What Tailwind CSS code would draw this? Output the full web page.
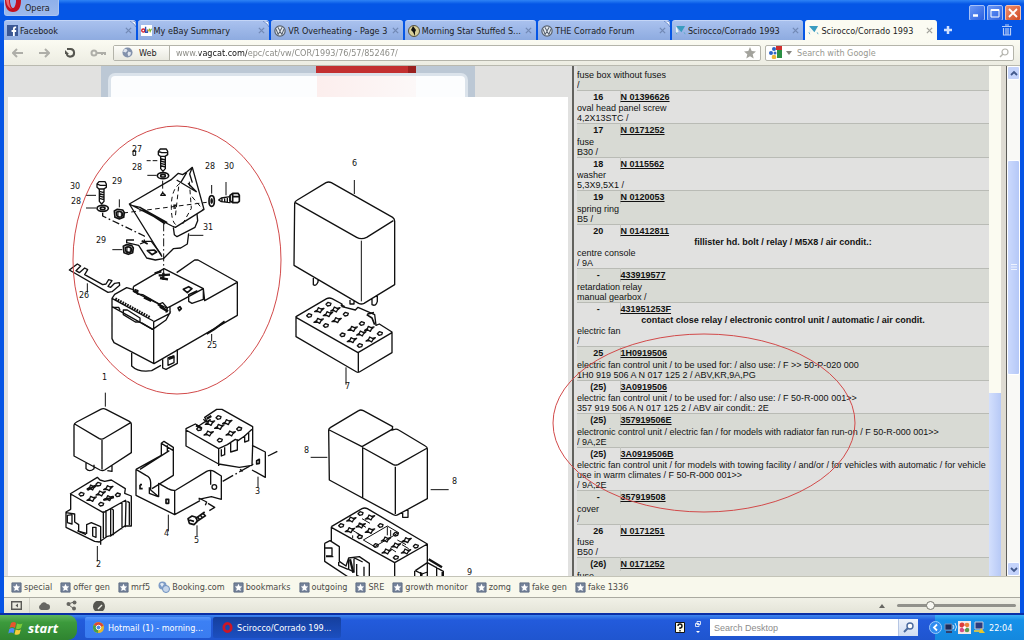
<!DOCTYPE html>
<html lang="en">
<head>
    <meta charset="UTF-8">
    <meta name="viewport" content="width=device-width, initial-scale=1.0">
    <title>Scirocco/Corrado 1993</title>
    <script src="https://cdn.jsdelivr.net/npm/@tailwindcss/browser@4"></script>
</head>
<body class="h-screen overflow-hidden flex flex-col bg-[#0554e5] font-['DejaVu_Sans_Condensed','DejaVu_Sans',sans-serif] text-[9px] leading-3 text-[#222]">

    <!-- shared symbols -->
    <svg class="hidden">
        <symbol id="vw" viewBox="0 0 14 14">
            <circle cx="7" cy="7" r="6" fill="#e8edf3" stroke="#56606e" stroke-width="1.4"/>
            <path d="M4.5 2.5 7 7l2.5-4.500M2.500 5l2.300 6L7 7.500 9.200 11l2.300-6" fill="none" stroke="#56606e" stroke-width="1.2"/>
        </symbol>
        <symbol id="vag" viewBox="0 0 12 12">
            <path d="M1 1h10L7 8z" fill="#3a9cc0"/><path d="M1 1l3 6-3 2z" fill="#e9f4f8"/><path d="M1 8l1 2M10 8l1 2" stroke="#59a9c6"/>
        </symbol>
        <symbol id="star" viewBox="0 0 12 12">
            <path d="M1 1h10v10H1z" fill="#75839b" stroke="#5d6b82"/>
            <path d="M6 2l1.200 2.700 2.800.3-2.100 1.900.6 2.900L6 8.400 3.500 9.800l.6-2.900L2 5l2.800-.3z" fill="#fff"/>
        </symbol>
        <symbol id="close" viewBox="0 0 8 8"><path d="M1 1l6 6M7 1L1 7" stroke="currentColor" stroke-width="1.500"/></symbol>
        <symbol id="curl" viewBox="0 0 6 6"><path d="M0 0h3q3 0 3 3v3Q5 3 0 0z" fill="#eef3fc" stroke="#5b7fc4" stroke-width=".7"/></symbol>
    </svg>

    <!-- title bar -->
    <header class="h-5 shrink-0 flex items-start justify-between pl-1 pr-[3px] bg-linear-to-b from-[#2e83f5] via-[#0556e6] via-20% to-[#0556e6]">
        <button class="h-4 flex items-center gap-1 pr-2 rounded-b-[3px] border border-t-0 border-[#a9c4f2] bg-linear-to-b from-[#8fb0ea] to-[#9cb9ec]">
            <svg class="w-4 h-4" viewBox="0 0 16 16"><path d="M0 0h5v2q1 6 3 6t3-6V0h5q0 12-8 12T0 0z" fill="#c4111f"/><path d="M1 0h3q0 7 3 9Q2 8 1 0z" fill="#ec6a70"/></svg>
            Opera
        </button>
        <div class="flex gap-[2px] pt-[5px]">
            <button aria-label="Minimize" class="w-4 h-4 rounded-[2px] border border-[#a6c1f7] bg-linear-to-br from-[#6a97f5] to-[#2b5fe0]"><svg viewBox="0 0 14 14"><path d="M3 9.500h5" stroke="#fff" stroke-width="2.500"/></svg></button>
            <button aria-label="Maximize" class="w-4 h-4 rounded-[2px] border border-[#a6c1f7] bg-linear-to-br from-[#6a97f5] to-[#2b5fe0]"><svg viewBox="0 0 14 14"><path d="M3 3.500h8V11H3z" fill="none" stroke="#fff"/><path d="M3 4h8" stroke="#fff" stroke-width="2"/></svg></button>
            <button aria-label="Close" class="w-4 h-4 rounded-[2px] border border-[#f3c0ae] bg-linear-to-br from-[#ee8d6b] to-[#d04a22]"><svg viewBox="0 0 14 14"><path d="M3 3l8 8M11 3l-8 8" stroke="#fff" stroke-width="1.800"/></svg></button>
        </div>
    </header>

    <!-- tabs -->
    <nav class="h-5 shrink-0 flex items-end px-1 bg-[#0556e6]">
        <div id="tabs" class="flex-1 max-w-[933px] flex gap-[2px] h-5"></div>
        <button aria-label="New tab" class="ml-[1px] w-5 h-5 flex items-center justify-center"><svg class="w-[10px] h-[10px]" viewBox="0 0 10 10"><path d="M5 1v8M1 5h8" stroke="#cfe0ff" stroke-width="2.500"/></svg></button>
        <button aria-label="Closed tabs" class="ml-auto mr-2 h-5 flex items-center"><svg class="w-[10px] h-3" viewBox="0 0 10 12"><path d="M0 2.500h10M3 1h4M1.500 4v7h7V4M4 4v7M6 4v7" stroke="#b9cdf6" stroke-width="1.200" fill="none"/></svg></button>
    </nav>

    <!-- address bar -->
    <div class="h-[26px] shrink-0 mx-1 px-2 flex items-center bg-linear-to-b from-[#fbfbf2] to-[#ecece2] border-b border-[#b9b9af]">
        <div class="flex items-center gap-[14px] w-[101px] shrink-0">
            <button aria-label="Back"><svg class="w-3 h-3" viewBox="0 0 12 12"><path d="M1 6h10M5 2L1 6l4 4" stroke="#aeaea8" stroke-width="2" fill="none"/></svg></button>
            <button aria-label="Forward"><svg class="w-3 h-3" viewBox="0 0 12 12"><path d="M11 6H1M7 2l4 4-4 4" stroke="#aeaea8" stroke-width="2" fill="none"/></svg></button>
            <button aria-label="Reload"><svg class="w-3 h-3" viewBox="0 0 12 12"><path d="M3 2h3.500a3.800 3.800 0 1 1-3.800 5" stroke="#55554f" stroke-width="2" fill="none"/><path d="M1 7V3l4 4z" fill="#55554f"/></svg></button>
            <button aria-label="Log in"><svg class="w-4 h-3" viewBox="0 0 16 12"><circle cx="4" cy="6" r="2.500" fill="none" stroke="#aeaea8" stroke-width="2"/><path d="M6 6h9v2M12 6v2" stroke="#aeaea8" stroke-width="2" fill="none"/></svg></button>
        </div>
        <div class="flex-1 h-4 flex items-center border border-[#b4b4aa] rounded-[2px] bg-white">
            <button class="h-full w-14 shrink-0 flex items-center gap-[6px] pl-2 border-r border-[#b4b4aa] bg-linear-to-b from-[#fdfdf9] to-[#e9e9e0]">
                <svg class="w-[11px] h-[11px]" viewBox="0 0 12 12"><circle cx="6" cy="6" r="5.500" fill="#8291ab"/><path d="M3 2q3 0 3 2L4 6 1 5zM7 5l3 1-1 3-2 1-1-3z" fill="#dfe5ee"/></svg>
                Web
            </button>
            <input type="text" aria-label="Address" value="www.vagcat.com/epc/cat/vw/COR/1993/76/57/852467/" class="flex-1 min-w-0 ml-1 pl-[2px] outline-none bg-clip-text text-transparent bg-[linear-gradient(90deg,#85857f_25px,#111_25px,#111_73px,#85857f_73px)]">
            <button aria-label="Bookmark" class="pr-1"><svg class="w-3 h-3" viewBox="0 0 12 12"><path d="M6 0l1.700 4 4.300.4-3.300 2.900 1 4.200L6 9.300l-3.700 2.200 1-4.200L0 4.400 4.300 4z" fill="#a3a39d"/></svg></button>
        </div>
        <div class="w-[249px] h-4 ml-1 mr-[-2px] flex items-center border border-[#b4b4aa] rounded-[2px] bg-white">
            <button aria-label="Search engine" class="flex items-center gap-1 pl-[3px]">
                <svg class="w-[13px] h-[13px]" viewBox="0 0 13 13"><path d="M0 0h13v13H0z" fill="#fff"/><path d="M7 0h6v4H7z" fill="#cf2f2c"/><path d="M8 4h5v8H8z" fill="#2a8f43"/><circle cx="5" cy="3" r="2" fill="#2c63c4"/><circle cx="2" cy="7" r="2" fill="#2c63c4"/><circle cx="5" cy="11" r="2.300" fill="#ecb638"/><circle cx="6" cy="7" r="1.500" fill="#3768c0"/></svg>
                <svg class="w-[6px] h-[4px]" viewBox="0 0 6 4"><path d="M0 0h6L3 4z" fill="#85857f"/></svg>
            </button>
            <input type="search" aria-label="Search with Google" placeholder="Search with Google" class="flex-1 min-w-0 ml-[5px] outline-none placeholder:text-[#97978f]">
            <svg class="w-[10px] h-[10px] mr-1" viewBox="0 0 10 10"><circle cx="6" cy="4" r="3" fill="none" stroke="#b4b4ae" stroke-width="1.200"/><path d="M4 6L1 9" stroke="#b4b4ae" stroke-width="1.500"/></svg>
        </div>
    </div>

    <!-- page -->
    <main class="relative flex-1 min-h-0 mx-1 flex overflow-hidden bg-[#e1e1e0]">
        <section class="flex-1 min-w-0 flex flex-col">
            <div class="h-[31px] shrink-0 ml-[97px] w-[374px] px-[7px] pt-[7px] bg-[linear-gradient(90deg,transparent_215px,#c22f30_215px,#c22f30_307px,#99201f_307px,#99201f_315px,transparent_315px)] bg-[#bcc8d5]">
                <div class="h-6 rounded-t-[7px] border-[3px] border-b-0 border-[#d3dde7]/80 bg-[linear-gradient(90deg,#fcfdfe_206px,#fceeed_206px,#fcf8f8_305px,#fcfdfe_305px)]"></div>
            </div>
            <div class="flex-1 min-h-0 ml-1 mr-1 bg-white overflow-hidden">
                <svg class="w-[560px] h-[479px]" viewBox="8 97 560 479" fill="none" stroke="#111" stroke-linejoin="round">
                    <defs>
                        <path id="slot" d="M-14 5L-6 0-3-7 5-3 14-5 6 2 3 8-4 4z" stroke-width="4"/>
                        <path id="dot" d="M-8 1L-2-5 7-2 5 4-3 6z" stroke-width="4"/>
                        <g id="nut"><path d="M-15-9L-6-14 10-12 15-4 13 10 0 15-13 10z" fill="#fff" stroke-width="5"/><path d="M-9-5q9-5 16 0t0 13q-9 3-14-2z" stroke-width="5"/><path d="M-4-8V12M6-8V10" stroke-width="3"/></g>
                        <g id="washer"><ellipse rx="17" ry="9" stroke-width="5"/><ellipse rx="7" ry="4" stroke-width="5"/></g>
                        <g id="screw"><path d="M-14-8L-8-15H10L14-8V2L6 7H-8L-14 2z M-14-8L-4-4H14" fill="#fff" stroke-width="4"/><path d="M-7 7V44L0 52 7 44V7M-7 14L7 18M-7 21L7 25M-7 28L7 32M-7 35L7 39" stroke-width="4"/></g>
                    </defs>

                    <!-- control unit and bracket -->
                    <svg x="60" y="120" width="230" height="280" viewBox="0 0 690 840" stroke-width="4">
                        <use href="#screw" x="309" y="102"/>
                        <path d="M219 92h8v14h-8z" stroke-width="3"/>
                        <use href="#washer" x="309" y="167"/>
                        <path d="M260 122h12M278 122h14M262 166h28M78 226h30M78 264h30M178 238v24M157 389h30M455 195v26M498 186v40M388 346h42M82 490v28M455 642v22" stroke-width="3"/>
                        <path d="M308 182v38M311 310v152" stroke-width="3" stroke-dasharray="24 8 5 8"/>
                        <path d="M302 226l6-8 8 8z"/>
                        <use href="#screw" x="125" y="200"/>
                        <use href="#washer" x="128" y="265"/>
                        <use href="#nut" x="178" y="282"/>
                        <use href="#nut" x="205" y="388"/>
                        <path d="M128 278v10l125 60v20" stroke-dasharray="22 8 5 8"/>
                        <!-- bracket -->
                        <path d="M208 252L335 178 355 160 368 164 380 156 397 142 432 268 346 322 336 318zM208 252L306 410M215 256L240 262 322 308M240 262l75 50M350 180l60 36M380 158l-18 30M397 142l-8 20 8 26M384 190l26 26"/>
                        <path d="M340 322l3 22 8 6 54-28 8-20-2-20M386 340l-4 32-20 12-22 2-30 30-24 4-26-6-24-38-36-8v-8l22 0M240 372l20-8M250 364l24 0 30 40"/>
                        <path d="M262 392l20-2 8 6-14 8zM245 362l18 10" stroke-width="5"/>
                        <path d="M190 279L440 247M360 190q-26 18-26 70t18 56M388 185l6 80-30 54M356 200l-10 90M396 230l34 40" stroke-width="3" stroke-dasharray="14 10"/>
                        <path d="M340 256h10M340 264h8" stroke-width="5"/>
                        <ellipse cx="455" cy="243" rx="8" ry="16" stroke-width="5"/><ellipse cx="455" cy="243" rx="2" ry="7"/>
                        <path d="M476 240l8-6 26-4v18l-26-3zM486 234v12M494 232v14M502 231v16"/><path d="M510 226l8-6h16l4 6v18l-5 4h-15l-8-6zM518 220v28M518 230h18" stroke-width="5"/>
                        <!-- clip -->
                        <path d="M28 450L52 432l10 6-14 14 10 6 16-14 9 5-9 15 54 30 10-2 8-13 10 3-12 17 8 3 12-12 14-2 1 8-23 19-12 2z"/>
                        <!-- housing -->
                        <path d="M350 458L404 420l10 0L532 486v100L282 731 162 668l-6-12V535l8-12 36-20 20 6M220 500L312 446l118 60 4 36 96-54M220 500v14l100 50 10-4 100-54M430 508v30l-34 12-10-6v-20l26-12M282 605L330 580v-22M156 535l124 68M156 560l122 68 40-28 14-26M281 604V730"/>
                        <path d="M166 536l104 56" stroke-width="8" stroke-dasharray="5 3"/>
                        <path d="M160 562l16 0 4 8M190 570l12 0 38 24v12l-14 0-36-22zM244 608l34 20M224 508l10 4-2 10 16 2 50 28 10-4 14 16-4 14"/>
                        <path d="M222 512l10 6M252 532l22 10M294 552l16 12M300 560l24 14" stroke-width="8"/>
                        <path d="M284 460l20-6M296 466l34-2M300 474l24 4M310 458v22" stroke-width="7"/>
                        <path d="M370 508l16-8 10 6-14 12zM354 564l6-4 4 6-6 6z" stroke-width="5"/>
                        <path d="M215 698v40q20 20 60 14l28-16M308 718v26l10 4 34-18v-42M324 714v22l18-8v-20z"/>
                        <path d="M440 642l22-14 32-24" stroke-width="6"/>
                        <path d="M326 716l16-6" stroke-width="9"/>
                    </svg>

                    <!-- relays 1 to 5 -->
                    <svg x="60" y="370" width="230" height="210" viewBox="0 0 690 630" stroke-width="4">
                        <path d="M136 68v42M112 528v46M325 434v50M411 466v32M594 320v34" stroke-width="3"/>
                        <path d="M42 166q0-6 8-10l72-38q8-4 16 0l70 36q6 3 6 8v86l-80 52q-6 3-14 0L42 258zM44 162l74 44q8 4 16-2l78-46M126 210v88M78 278v18q10 12 24 0v-12M142 302l14 2V286"/>
                        <path d="M30 372L112 322l8 8 14 4 20-4 42 26-2 14 20 8v90l-20 0-40 28-14 4-22 16-14-2L18 472V426l14-8V372l98 56 68-38M130 424v80M18 428l26 4v24l12 8v20l24 6v-26l14-6 28 12v54M138 420v80M152 414v86M186 396v82M198 392l-2 80"/>
                        <path d="M22 436v22l14 4V434zM98 472v26l10 4v-30zM52 482l26 12M154 416l6 4v76M202 394l6 4v68"/>
                        <use href="#slot" x="95" y="352"/><use href="#slot" x="122" y="370"/><use href="#slot" x="95" y="386"/><use href="#slot" x="145" y="354"/><use href="#slot" x="146" y="384"/>
                        <use href="#dot" x="65" y="372"/><use href="#dot" x="116" y="342"/><use href="#dot" x="174" y="374"/><use href="#dot" x="124" y="402"/><path d="M82 360l26-14M130 390l32-8" stroke-width="6"/>
                        <path d="M228 298l76-42v-36l8-6 28 18v84l-64 40M228 298v78l116 58 76-42M228 298l30 18q14 6 14 22v22l24 20V340l28 16q16 8 24 4l92-56q12-6 22 0l22 14v70l-30-8-38 8M304 220l36 22M322 226v20M240 298l88-56M344 362v70M452 300v44M268 352v18l26 10M416 384l24 12-4 10M444 400l20 12-16 10"/>
                        <path d="M240 344v12h8M240 344h6M318 388h8v12h-8z" stroke-width="5"/>
                        <circle cx="463" cy="351" r="7"/>
                        <path d="M488 334l92-52M624 258l28-14" stroke-dasharray="36 8 5 8"/>
                        <path d="M384 446l12-8 12 4 4 12-10 10-14-4zM388 450l14 4M406 446l28-20M408 456l30-20M412 440l8 10M420 434l8 10M428 428l8 10" stroke-width="5"/>
                        <path d="M378 176l28-14 10 6 24-16-6-10 36-24 16 0 92 52v56l-2 60-38 6-62-10-98-54zM378 180l98 56v52M476 236l26-12M502 224l24-16 8 4 20-14 22-20M512 216v30l20-6v-32M484 238v20l10-4v-22M554 196v20l12-4v-26M576 226l40 20v76l-40-22M430 148l10 8 12-8"/>
                        <path d="M440 146l14-8M408 166l16 8" stroke-width="7"/>
                        <use href="#slot" x="450" y="158"/><use href="#slot" x="502" y="156"/><use href="#slot" x="478" y="170"/><use href="#slot" x="446" y="190"/><use href="#slot" x="512" y="190"/><use href="#dot" x="476" y="142"/><use href="#dot" x="538" y="176"/><use href="#dot" x="480" y="210"/><use href="#dot" x="418" y="176"/>
                        <path d="M590 272l8-4v12l-8 2zM540 298l8 6" stroke-width="5"/>
                    </svg>

                    <!-- relay 6 and socket 7 -->
                    <svg x="280" y="150" width="200" height="250" viewBox="0 0 600 750" stroke-width="4">
                        <path d="M223 90v42M198 652v52M244 272v182" stroke-width="3"/>
                        <path d="M44 160q0-6 8-10l86-52q8-4 16 0l184 104q6 4 6 12v190L252 460q-8 4-16 0L42 346zM46 158l184 104q14 8 30 0l80-50M100 384v20q8 6 14-8v-6M210 450v12h12v-8M276 446v18q12 6 16-10v-18"/>
                        <path d="M48 500L140 446q8-4 16 0l30 16v8l40 10 8-8 50 22 4 32 10-4 38 24v62l-98 58q-4 2-8 0L48 560zM48 502l186 106 102-60M235 608v58"/>
                        <path d="M260 494l16 10 8 20M182 464l12 6M262 492l20-4" stroke-width="5"/>
                        <use href="#slot" x="118" y="480"/><use href="#slot" x="166" y="478"/><use href="#slot" x="144" y="492"/><use href="#slot" x="116" y="512"/><use href="#slot" x="170" y="510"/><use href="#slot" x="218" y="536"/><use href="#slot" x="268" y="536"/><use href="#slot" x="244" y="550"/><use href="#slot" x="216" y="570"/><use href="#slot" x="272" y="568"/>
                        <use href="#dot" x="146" y="462"/><use href="#dot" x="88" y="496"/><use href="#dot" x="198" y="492"/><use href="#dot" x="138" y="526"/><use href="#dot" x="246" y="520"/><use href="#dot" x="188" y="554"/><use href="#dot" x="300" y="550"/><use href="#dot" x="240" y="586"/>
                    </svg>

                    <!-- relays 8 and socket 9 -->
                    <svg x="290" y="390" width="200" height="190" viewBox="0 0 600 570" stroke-width="4">
                        <path d="M62 202h50M422 299h54" stroke-width="3"/>
                        <path d="M116 120q0-4 6-8l84-50q6-4 14 0l88 48-2 10 8-2q6-2 12 2l80 48q6 3 6 8v150L324 374q-6 4-14 0L118 270zM118 120l98 50 94-54M218 172v152M220 174l90 50q6 3 14 0l88-50M316 230v142M338 366v16h16v-26"/>
                        <path d="M124 410l92-54q8-4 16 0l180 106v58M124 412l190 106 98-56M314 518v52M124 410v46M104 460l16-8 28 18v44l20 14 8-24 32-4 30 20v50M104 460v54l84 56M106 474l20 0v24l-18 0M146 516v10l28 12M176 508v30l16 8v-40M200 522v34l12 6M222 530v30M376 542l36-24 48 26v30M374 542v28M392 546v24M412 518v50M376 542l20 10 16-6M440 530v30M190 502l28 14M108 500h22"/>
                        <path d="M220 450l72-42 34 20-72 42zM292 410v26M302 420v20M186 420l24 14M206 400l22 12M216 386l24 14M322 450l26 14M336 464l20 12M300 474l18 12M188 436v8M200 430l16 8" stroke-width="3"/>
                        <use href="#slot" x="184" y="388"/><use href="#slot" x="240" y="382"/><use href="#slot" x="212" y="406"/><use href="#slot" x="180" y="420"/><use href="#slot" x="240" y="422"/><use href="#slot" x="288" y="448"/><use href="#slot" x="350" y="450"/><use href="#slot" x="318" y="466"/><use href="#slot" x="290" y="484"/><use href="#slot" x="348" y="484"/>
                        <use href="#dot" x="212" y="370"/><use href="#dot" x="154" y="406"/><use href="#dot" x="272" y="406"/><use href="#dot" x="210" y="440"/><use href="#dot" x="318" y="432"/><use href="#dot" x="258" y="466"/><use href="#dot" x="378" y="468"/><use href="#dot" x="318" y="502"/>
                        <path d="M180 508l10 40M394 548v20M458 546v24M416 508l40 24" stroke-width="7"/>
                    </svg>

                    <g class="font-['DejaVu_Sans',sans-serif] text-[8px]" fill="#111" stroke="none">
                        <text x="132" y="152">27</text><text x="132" y="170">28</text><text x="70" y="189">30</text><text x="71" y="204">28</text>
                        <text x="112" y="184">29</text><text x="205" y="169">28</text><text x="224" y="169">30</text><text x="203" y="230">31</text>
                        <text x="96" y="243">29</text><text x="79" y="298">26</text><text x="207" y="348">25</text><text x="102" y="380">1</text>
                        <text x="96" y="567">2</text><text x="255" y="494">3</text><text x="164" y="536">4</text><text x="194" y="543">5</text>
                        <text x="352" y="166">6</text><text x="345" y="389">7</text><text x="304" y="453">8</text><text x="452" y="484">8</text><text x="467" y="575">9</text>
                    </g>
                </svg>
            </div>
        </section>

        <!-- parts list -->
        <section class="w-[448px] shrink-0 flex border-l-2 border-[#62625e] pl-[3px]">
            <div class="flex-1 min-w-0 overflow-hidden bg-[#e1e1e0]">
                <table id="parts" class="w-full table-fixed border-collapse font-['Liberation_Sans',Arial,sans-serif] text-[9px] leading-[10px] text-[#111]">
                    <colgroup><col class="w-[43px]"><col></colgroup>
                </table>
            </div>
            <div class="w-3 shrink-0 flex flex-col justify-end bg-[#fbfbf1]"><div class="h-[183px] bg-linear-to-r from-[#d3dffc] to-[#b7c9f6]"></div></div>
            <div class="w-[6px] shrink-0 bg-[#dedbd2] border-r border-[#5c5c58]"></div>
            <div class="w-[13px] shrink-0 flex flex-col bg-[#f9f9f6]">
                <button aria-label="Scroll up" class="h-[14px] flex items-center justify-center rounded-[2px] border border-white bg-[#c4d3fb]"><svg class="w-2 h-2" viewBox="0 0 8 8"><path d="M1 6l3-3 3 3" stroke="#42598c" stroke-width="1.800" fill="none"/></svg></button>
                <div class="grow-[81]"></div>
                <div class="grow-[211] flex items-center justify-center rounded-[2px] border border-white bg-linear-to-r from-[#cbd9fd] to-[#b5c8f7]"><svg class="w-[6px] h-[6px]" viewBox="0 0 6 6"><path d="M0 .5h6M0 3h6M0 5.500h6" stroke="#eef3ff"/></svg></div>
                <div class="grow-[190]"></div>
                <button aria-label="Scroll down" class="h-[14px] flex items-center justify-center rounded-[2px] border border-white bg-[#c4d3fb]"><svg class="w-2 h-2" viewBox="0 0 8 8"><path d="M1 3l3 3 3-3" stroke="#42598c" stroke-width="1.800" fill="none"/></svg></button>
            </div>
        </section>

        <!-- red markup drawn over the page -->
        <svg class="absolute left-0 top-0 w-[1016px] h-[510px] pointer-events-none" viewBox="4 66 1016 510" fill="none" stroke="#d24a4a">
            <ellipse cx="177" cy="260" rx="104" ry="134"/>
            <ellipse cx="704" cy="423" rx="151" ry="89"/>
        </svg>
    </main>

    <!-- bookmarks bar -->
    <nav id="bookmarks" class="h-[21px] shrink-0 mx-1 pl-[7px] flex items-center gap-2 bg-[#f8f8ec] border-t border-[#c4c4b8] text-[#4c4c48]"></nav>

    <!-- status bar -->
    <footer class="h-4 shrink-0 mx-1 flex items-center bg-linear-to-b from-[#f1f1e7] to-[#e4e4d8] border-t border-[#aaaaa0]">
        <button aria-label="Panels" class="w-[26px] h-full flex items-center justify-center border-r border-[#d3d3c9]"><svg class="w-[11px] h-[9px]" viewBox="0 0 11 9"><path d="M.7.7h9.600v7.600H.7z" fill="none" stroke="#5a5a56" stroke-width="1.400"/><path d="M7 2.500v4L4.500 4.500z" fill="#5a5a56"/></svg></button>
        <div class="flex items-center gap-4 pl-2">
            <button aria-label="Link"><svg class="w-3 h-[9px]" viewBox="0 0 12 9"><path d="M3 9a3 3 0 0 1-.3-5.500A3.500 3.500 0 0 1 9 3a3 3 0 0 1 0 6z" fill="#666662"/></svg></button>
            <button aria-label="Unite"><svg class="w-[11px] h-[11px]" viewBox="0 0 11 11"><path d="M2 4l6-2M3 5l5 4" stroke="#666662"/><circle cx="2.500" cy="4" r="2" fill="#666662"/><circle cx="8.500" cy="2.500" r="2" fill="#666662"/><circle cx="8" cy="8.500" r="2" fill="#666662"/></svg></button>
            <button aria-label="Turbo"><svg class="w-3 h-[10px]" viewBox="0 0 12 10"><path d="M2 10A6 6 0 1 1 10 10z" fill="#55554f"/><path d="M5 8l4-4" stroke="#ecece2" stroke-width="1.500"/></svg></button>
        </div>
        <button aria-label="View" class="ml-auto mr-3"><svg class="w-[6px] h-[4px]" viewBox="0 0 6 4"><path d="M0 4h6L3 0z" fill="#666662"/></svg></button>
        <input type="range" aria-label="Zoom" min="0" max="100" value="26" class="w-[119px] h-[3px] mr-1 appearance-none rounded bg-[#91918b] [&::-webkit-slider-thumb]:appearance-none [&::-webkit-slider-thumb]:w-[9px] [&::-webkit-slider-thumb]:h-[9px] [&::-webkit-slider-thumb]:rounded-full [&::-webkit-slider-thumb]:border [&::-webkit-slider-thumb]:border-[#77776f] [&::-webkit-slider-thumb]:bg-[#f8f8f2]">
    </footer>

    <!-- taskbar -->
    <footer class="h-[27px] shrink-0 flex items-stretch border-t-2 border-[#0a2fa6] bg-linear-to-b from-[#3f86ee] via-[#235bdc] via-20% to-[#1f55cf] text-white">
        <button class="w-[77px] flex items-center gap-1 pl-2 rounded-r-[9px] bg-linear-to-b from-[#5cb45a] via-[#3c9a3c] via-30% to-[#2f8430] font-['Open_Sans','Liberation_Sans',sans-serif] text-[13px] font-bold italic">
            <svg class="w-4 h-4" viewBox="0 0 16 16"><path d="M3 3q3-2 5 0L7 8Q4 6 1.500 8z" fill="#e8552d"/><path d="M9 3.500q3 1.500 5.500 0L13 8q-3 2-5 .5z" fill="#7ecb3a"/><path d="M1.300 9q3-2 5.200 0L5.500 13.500q-2-2-5.200 0z" fill="#4b8cf5"/><path d="M7.700 9.500q3 1.500 5.200 0L11.500 14q-2 1.500-5 .3z" fill="#f7cd3a"/></svg>
            start
        </button>
        <button class="w-[126px] ml-2 my-[2px] flex items-center gap-1 pl-2 rounded-[2px] bg-linear-to-b from-[#5a98fa] via-[#3c80f4] via-20% to-[#3a7cf0]">
            <svg class="w-[11px] h-[11px]" viewBox="0 0 12 12"><circle cx="6" cy="6" r="6" fill="#e5b92e"/><path d="M6 6L1 3a6 6 0 0 1 10.500 1z" fill="#dc4636"/><path d="M6 6L.8 3A6 6 0 0 0 5.500 12z" fill="#45a04a"/><circle cx="6" cy="6" r="2.500" fill="#4c87e6" stroke="#fff"/></svg>
            Hotmail (1) - morning...
        </button>
        <button class="w-[128px] ml-[2px] my-[2px] flex items-center gap-1 pl-[9px] rounded-[2px] bg-linear-to-b from-[#153f9e] to-[#1c4fc0]">
            <svg class="w-[11px] h-[11px]" viewBox="0 0 12 12"><ellipse cx="6" cy="6" rx="4" ry="4.500" fill="none" stroke="#cc1627" stroke-width="3"/></svg>
            Scirocco/Corrado 199...
        </button>
        <div class="ml-auto flex items-center gap-[10px] pr-[9px]">
            <svg class="w-[10px] h-[11px]" viewBox="0 0 10 11"><path d="M.5.5h9v10h-9z" fill="#fffde9" stroke="#111"/><path d="M3 4q0-2 2-2t2 2-2 2v1M5 8v1.500" stroke="#111" stroke-width="1.400" fill="none"/></svg>
            <svg class="w-[6px] h-[14px]" viewBox="0 0 6 14"><path d="M2 .5h3.500v3H2zM.5 2.500H4v3H.5z" fill="#2459d8" stroke="#fff" stroke-width=".8"/><path d="M1 10h4l-2 2z" fill="#fff"/></svg>
        </div>
        <div class="w-[208px] my-1 flex items-stretch bg-white text-[#444]">
            <input type="search" aria-label="Search Desktop" placeholder="Search Desktop" class="flex-1 min-w-0 pl-1 outline-none font-['Liberation_Sans',Arial,sans-serif] placeholder:text-[#8c8c8c]">
            <button aria-label="Search" class="w-5 flex items-center justify-center bg-linear-to-b from-[#eef3fb] to-[#cfdcf2] border-l border-[#b6c6e4]"><svg class="w-[11px] h-[11px]" viewBox="0 0 11 11"><circle cx="7" cy="4" r="3" fill="#fff" stroke="#4a6a9e" stroke-width="1.400"/><path d="M5 6l-4 4" stroke="#4a6a9e" stroke-width="2"/></svg></button>
        </div>
        <div class="ml-[17px] w-[89px] flex items-center bg-linear-to-b from-[#3cb0f5] via-[#1691e9] via-20% to-[#1488de]">
            <button aria-label="Show hidden icons" class="-ml-[6px]"><svg class="w-[13px] h-[13px]" viewBox="0 0 13 13"><circle cx="6.500" cy="6.500" r="6" fill="#2f8cf0" stroke="#9ccbfa"/><path d="M8 3.500l-3 3 3 3" stroke="#fff" stroke-width="1.800" fill="none"/></svg></button>
            <svg class="ml-[2px] w-[13px] h-3" viewBox="0 0 13 12"><path d="M1 2h7v6H1z" fill="#1d2c58" stroke="#7b8fb8"/><path d="M2 10h6" stroke="#30406c" stroke-width="2"/><path d="M9 3q2 2 0 4M11 1q3 4 0 8" stroke="#cfe3fb" fill="none"/></svg>
            <svg class="ml-[1px] w-[13px] h-[13px]" viewBox="0 0 13 13"><path d="M0 0h13v13H0z" fill="#f5e8e6"/><circle cx="4" cy="4" r="2.500" fill="#dd3a3a"/><circle cx="9" cy="4" r="2.300" fill="#e8823b"/><circle cx="4" cy="9" r="2.300" fill="#d64c86"/><circle cx="9" cy="9" r="2.300" fill="#5a9a50"/><circle cx="6.500" cy="6.500" r="1.500" fill="#fff"/></svg>
            <svg class="ml-[2px] w-3 h-[13px]" viewBox="0 0 12 13"><path d="M2 1h8v7H2z" fill="#2b3c80" stroke="#c9cfda"/><path d="M1 10h9" stroke="#c8c05a" stroke-width="2"/><path d="M8 7l4 5H6z" fill="#e6c62c"/></svg>
            <span class="ml-1">22:04</span>
        </div>
    </footer>

    <script>
        const icons = {
            facebook: '<svg class="w-[11px] h-[11px] shrink-0" viewBox="0 0 12 12"><path d="M0 0h12v12H0z" fill="#3a5795"/><path d="M10 2.500H9q-1.500 0-1.500 1.500v8M5 6.500h5" stroke="#fff" stroke-width="2" fill="none"/></svg>',
            ebay: '<svg class="w-[11px] h-[11px] shrink-0" viewBox="0 0 12 12"><path d="M0 0h12v12H0z" fill="#fff"/><circle cx="2.500" cy="6" r="1.700" fill="none" stroke="#d8232f" stroke-width="1.500"/><path d="M5 2v6h2V5" fill="none" stroke="#2b4fb5" stroke-width="1.500"/><circle cx="8" cy="6" r="1" fill="#e9b51f"/><path d="M9 4l1 3 1.500-3" stroke="#7cb52e" stroke-width="1.300" fill="none"/></svg>',
            morning: '<svg class="w-3 h-3 shrink-0" viewBox="0 0 12 12"><circle cx="6" cy="6" r="5.500" fill="#d8cf9a" stroke="#56523f"/><path d="M5 1l3 4-1 2v4L5 7 3 5z" fill="#111"/></svg>',
            vw: '<svg class="w-3 h-3 shrink-0"><use href="#vw"/></svg>',
            vag: '<svg class="w-[11px] h-[11px] shrink-0"><use href="#vag"/></svg>'
        };

        // icon, title, has the curled corner, active
        const tabs = [
            ['facebook', 'Facebook', true],
            ['ebay', 'My eBay Summary', true],
            ['vw', 'VR Overheating - Page 3', false],
            ['morning', 'Morning Star Stuffed S...', false],
            ['vw', 'THE Corrado Forum', true],
            ['vag', 'Scirocco/Corrado 1993', false],
            ['vag', 'Scirocco/Corrado 1993', false, true]
        ];
        document.getElementById('tabs').innerHTML = tabs.map(([icon, title, curl, active]) => `
            <div class="relative flex-1 min-w-0 flex items-center gap-[2px] pl-[3px] pr-1 rounded-t-[3px] border-t ${active ? 'bg-[#fbfbf2] border-[#fbfbf2]' : 'bg-linear-to-b from-[#a9c1ee] to-[#8eabe0] border-[#c3d5f7]'}">
                ${icons[icon]}
                <a href="#" class="flex-1 whitespace-nowrap overflow-hidden text-[#1c1c1c]">${title}</a>
                <button aria-label="Close tab" class="${active ? 'text-[#a3a39c]' : 'text-[#7289b5]'}"><svg class="w-[7px] h-[7px]"><use href="#close"/></svg></button>
                ${curl ? '<svg class="absolute right-0 top-0 w-[6px] h-[6px]"><use href="#curl"/></svg>' : ''}
            </div>`).join('');

        const bookmarks = ['special', 'offer gen', 'mrf5', 'Booking.com', 'bookmarks', 'outgoing', 'SRE', 'growth monitor', 'zomg', 'fake gen', 'fake 1336'];
        const booking = '<svg class="w-3 h-3" viewBox="0 0 12 12"><circle cx="4.500" cy="4.500" r="4" fill="#7e9cc6"/><circle cx="8" cy="8" r="3.500" fill="#c5d5ea" stroke="#6d8fbe"/><path d="M2 3q2-2 4 0L4 6z" fill="#e2ebf5"/></svg>';
        document.getElementById('bookmarks').innerHTML = bookmarks.map(name => `
            <a href="#" class="flex items-center gap-[2px] whitespace-nowrap">${name === 'Booking.com' ? booking : '<svg class="w-[11px] h-[11px]"><use href="#star"/></svg>'}${name}</a>`).join('');

        // position, part number, description lines, bold heading
        const parts = [
            ['16', 'N 01396626', ['oval head panel screw', '4,2X13STC /']],
            ['17', 'N 0171252', ['fuse', 'B30 /']],
            ['18', 'N 0115562', ['washer', '5,3X9,5X1 /']],
            ['19', 'N 0120053', ['spring ring', 'B5 /']],
            ['20', 'N 01412811', ['centre console', '/ 9A'], 'fillister hd. bolt / relay / M5X8 / air condit.:'],
            ['-', '433919577', ['retardation relay', 'manual gearbox /']],
            ['-', '431951253F', ['electric fan', '/'], 'contact close relay / electronic control unit / automatic / air condit.'],
            ['25', '1H0919506', ['electric fan control unit / to be used for: / also use: / F &gt;&gt; 50-P-020 000', '1H0 919 506 A N 017 125 2 / ABV,KR,9A,PG']],
            ['(25)', '3A0919506', ['electric fan control unit / to be used for: / also use: / F 50-R-000 001&gt;&gt;', '357 919 506 A N 017 125 2 / ABV air condit.: 2E']],
            ['(25)', '357919506E', ['electronic control unit / electric fan / for models with radiator fan run-on / F 50-R-000 001&gt;&gt;', '/ 9A,2E']],
            ['(25)', '3A0919506B', ['electric fan control unit / for models with towing facility / and/or / for vehicles with automatic / for vehicle', 'use in warm climates / F 50-R-000 001&gt;&gt;', '/ 9A,2E']],
            ['-', '357919508', ['cover', '/']],
            ['26', 'N 0171251', ['fuse', 'B50 /']],
            ['(26)', 'N 0171252', ['fuse']]
        ];
        document.getElementById('parts').innerHTML += `
            <tbody class="bg-[#d8dad4] border-b border-[#b9bbb5]">
                <tr><td colspan="2" class="p-0 pt-1">fuse box without fuses<br>/</td></tr>
            </tbody>` + parts.map(([pos, number, lines, heading]) => `
            <tbody class="odd:bg-[#e1e1e0] even:bg-[#d8dad4] border-b border-[#b9bbb5] group">
                <tr class="h-[14px] group-odd:h-3">
                    <th class="p-0 font-bold text-center">${pos}</th>
                    <td class="p-0 border-l border-[#c3c5bf]"><a href="#" class="font-bold underline">${number}</a></td>
                </tr>
                <tr><td colspan="2" class="p-0">${heading ? `<b class="block text-center leading-[11px]">${heading}</b>` : ''}${lines.join('<br>')}</td></tr>
            </tbody>`).join('');
    </script>
</body>
</html>
